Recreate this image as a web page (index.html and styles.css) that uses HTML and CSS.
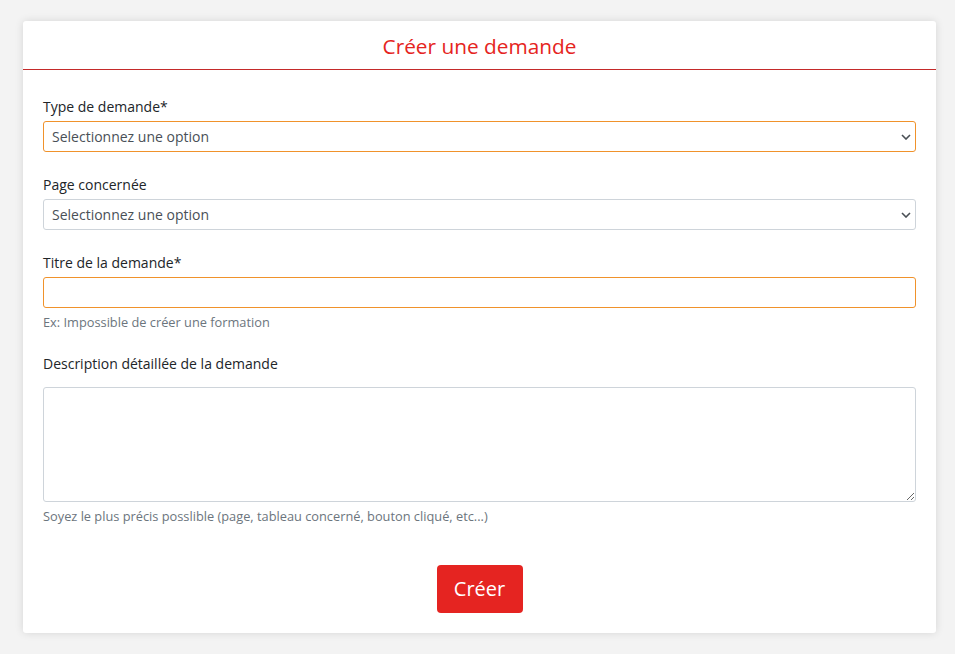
FILE: index.html
```html
<!DOCTYPE html>
<html lang="fr">
<head>
<meta charset="utf-8">
<title>Créer une demande</title>
<link rel="stylesheet" href="styles.css">
</head>
<body>
<div class="page">
  <div class="card">
    <div class="card-header">Créer une demande</div>
    <form class="card-body">
      <div class="group">
        <label class="label">Type de demande*</label>
        <div class="select-wrap">
          <select class="control select required"><option>Selectionnez une option</option></select>
          <svg class="chevron" width="10" height="6" viewBox="0 0 10 6"><path d="M1 1 L5 5 L9 1" fill="none" stroke="#4a4f55" stroke-width="1.6"/></svg>
        </div>
      </div>
      <div class="group">
        <label class="label">Page concernée</label>
        <div class="select-wrap">
          <select class="control select"><option>Selectionnez une option</option></select>
          <svg class="chevron" width="10" height="6" viewBox="0 0 10 6"><path d="M1 1 L5 5 L9 1" fill="none" stroke="#4a4f55" stroke-width="1.6"/></svg>
        </div>
      </div>
      <div class="group">
        <label class="label">Titre de la demande*</label>
        <input class="control required" type="text">
        <div class="help">Ex: Impossible de créer une formation</div>
      </div>
      <div class="group">
        <label class="label label-desc">Description détaillée de la demande</label>
        <textarea class="control area"></textarea>
        <div class="help">Soyez le plus précis posslible (page, tableau concerné, bouton cliqué, etc...)</div>
      </div>
      <div class="actions">
        <button type="button" class="btn">Créer</button>
      </div>
    </form>
  </div>
</div>
</body>
</html>
```

FILE: styles.css
```css
* { box-sizing: border-box; }
html, body { margin: 0; padding: 0; }
body {
  background: #f3f3f3;
  font-family: "Open Sans", "Liberation Sans", sans-serif;
  color: #212529;
  width: 955px;
  height: 654px;
  overflow: hidden;
}
.page {
  padding: 21px 19px 0 23px;
}
.card {
  background: #fff;
  border-radius: 3px;
  box-shadow: 0 0 8px rgba(0,0,0,0.12);
  width: 913px;
  height: 612px;
  display: flex;
  flex-direction: column;
}
.card-header {
  height: 49px;
  border-bottom: 1px solid #c42a2a;
  color: #e52421;
  font-size: 20.8px;
  line-height: 50px;
  text-align: center;
}
.card-body {
  padding: 26px 20px 20px;
  display: flex;
  flex-direction: column;
}
.group {
  display: flex;
  flex-direction: column;
  margin-bottom: 22px;
}
.label {
  font-size: 14px;
  line-height: 21px;
  margin-bottom: 4px;
  color: #212529;
}
.label-desc { margin-bottom: 13px; }
.select-wrap {
  position: relative;
}
.chevron {
  position: absolute;
  right: 5px;
  top: 13px;
  pointer-events: none;
}
.control {
  display: block;
  width: 100%;
  height: 31px;
  border: 1px solid #ced4da;
  border-radius: 3px;
  font-family: "Open Sans", "Liberation Sans", sans-serif;
  font-size: 14px;
  color: #495057;
  background-color: #fff;
  padding: 0 8px;
  margin: 0;
  outline: none;
}
.select {
  -webkit-appearance: none;
  appearance: none;
}
.control.required { border-color: #f0922b; }
.area {
  height: 115px;
  resize: vertical;
  padding: 6px 8px;
}
.help {
  margin-top: 5px;
  font-size: 12.8px;
  line-height: 18px;
  color: #6c757d;
}
.actions {
  display: flex;
  justify-content: center;
  margin-top: 18px;
}
.btn {
  background: #e52421;
  color: #fff;
  border: none;
  border-radius: 4px;
  font-family: "Open Sans", "Liberation Sans", sans-serif;
  font-size: 20px;
  line-height: 30px;
  width: 86px;
  height: 48px;
  padding: 0;
  cursor: pointer;
}
```
